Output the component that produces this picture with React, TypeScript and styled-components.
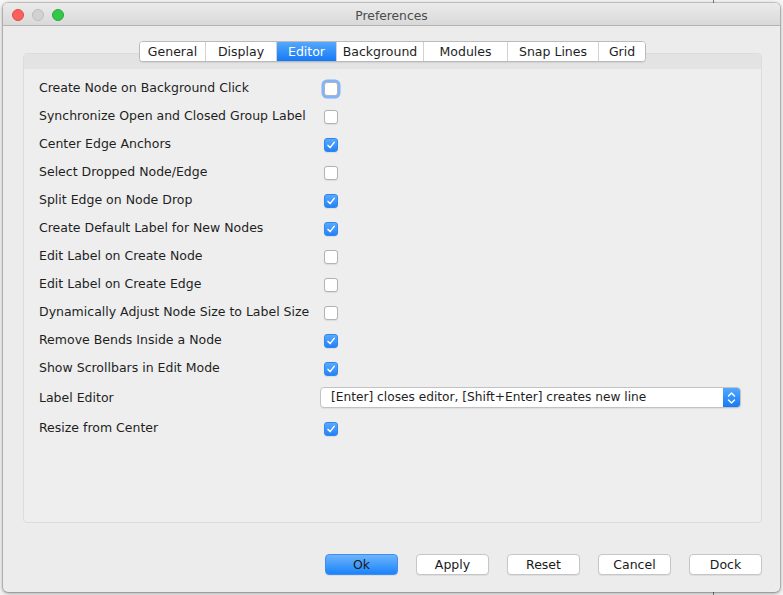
import React from 'react';
import styled, { createGlobalStyle } from 'styled-components';

const Global = createGlobalStyle`
  *, *::before, *::after { box-sizing: border-box; }
  html, body { margin: 0; padding: 0; }
  body {
    width: 783px;
    height: 595px;
    overflow: hidden;
    background:
      linear-gradient(to right, transparent 713px, #7d7d7d 713px, #7d7d7d 714px, transparent 714px),
      #f5f5f5;
    font-family: "DejaVu Sans", "Liberation Sans", sans-serif;
    font-size: 12.5px;
    color: #1e1e1e;
  }
`;

const Window = styled.div`
  margin: 3px 3px 0 3px;
  width: 777px;
  height: 589px;
  display: flex;
  flex-direction: column;
  background: #ececec;
  border-radius: 5px;
  overflow: hidden;
  box-shadow: 0 0 0 1px rgba(0, 0, 0, 0.12), 0 1px 4px rgba(0, 0, 0, 0.45);
`;

const TitleBar = styled.div`
  flex: none;
  height: 23px;
  display: grid;
  grid-template-columns: 1fr auto 1fr;
  align-items: center;
  background: linear-gradient(#ebebeb, #d9d9d9);
  border-bottom: 1px solid #b3b3b3;
`;

const Lights = styled.div`
  display: flex;
  gap: 8px;
  padding-left: 9px;
  padding-top: 1px;
`;

const Light = styled.span<{ $fill: string; $edge: string }>`
  width: 12px;
  height: 12px;
  border-radius: 50%;
  background: ${(p) => p.$fill};
  border: 1px solid ${(p) => p.$edge};
`;

const Title = styled.div`
  font-size: 12.3px;
  color: #4b4b4b;
  padding-top: 4px;
`;

const Body = styled.div`
  flex: 1;
  display: flex;
  flex-direction: column;
  padding: 15px 18px 0 20px;
`;

const TabsRow = styled.div`
  display: flex;
  justify-content: center;
  position: relative;
  z-index: 1;
`;

const TabBar = styled.div`
  display: flex;
  height: 21px;
  background: #fff;
  border: 1px solid #bababa;
  border-radius: 4px;
  overflow: hidden;
  box-shadow: 0 1px 1px rgba(0, 0, 0, 0.08);
`;

const Tab = styled.div<{ $w: number; $active?: boolean }>`
  width: ${(p) => p.$w}px;
  text-align: center;
  line-height: 19px;
  font-size: 12.5px;
  white-space: nowrap;
  border-left: 1px solid #d2d2d2;
  color: ${(p) => (p.$active ? '#fff' : '#1e1e1e')};
  background: ${(p) => (p.$active ? 'linear-gradient(#54a8fc, #157af6)' : '#fff')};
  &:first-child { border-left: none; }
`;

const Panel = styled.div`
  margin-top: -9px;
  height: 470px;
  background: #eeeeee;
  border: 1px solid #dcdcdc;
  border-radius: 4px;
  overflow: hidden;
`;

const Band = styled.div`
  height: 15px;
  background: #e3e3e3;
`;

const Rows = styled.div`
  padding: 4px 0 0 15px;
`;

const Row = styled.div<{ $h?: number }>`
  display: grid;
  grid-template-columns: 281px 421px;
  align-items: center;
  height: ${(p) => p.$h ?? 28}px;
`;

const Label = styled.span`
  font-size: 12.5px;
  white-space: nowrap;
  color: #1e1e1e;
`;

const Box = styled.span<{ $checked?: boolean; $focused?: boolean }>`
  margin: 3px 0 0 4px;
  width: 14px;
  height: 14px;
  border-radius: 3px;
  display: flex;
  align-items: center;
  justify-content: center;
  border: 1px solid ${(p) => (p.$checked ? '#2f86f2' : '#b3b3b3')};
  background: ${(p) => (p.$checked ? 'linear-gradient(#5aabfd, #2482f7)' : '#fff')};
  box-shadow: ${(p) =>
    p.$focused ? '0 0 0 2.5px rgba(95, 160, 250, 0.75)' : '0 0.5px 1px rgba(0,0,0,0.08)'};
`;

const Combo = styled.div`
  height: 21px;
  margin-top: 1px;
  display: flex;
  align-items: stretch;
  background: #fff;
  border: 1px solid #c2c2c2;
  border-radius: 4px;
  overflow: hidden;
  box-shadow: 0 1px 1px rgba(0, 0, 0, 0.06);
`;

const ComboText = styled.span`
  flex: 1;
  padding-left: 10px;
  line-height: 19px;
  font-size: 12.2px;
  white-space: nowrap;
`;

const ComboArrow = styled.span`
  width: 17px;
  display: flex;
  align-items: center;
  justify-content: center;
  background: linear-gradient(#54a8fc, #157af6);
`;

const Footer = styled.div`
  display: flex;
  justify-content: flex-end;
  gap: 18px;
  margin-top: 31px;
`;

const Button = styled.div<{ $primary?: boolean }>`
  width: 73px;
  height: 21px;
  display: flex;
  align-items: center;
  justify-content: center;
  font-size: 12.5px;
  color: #1a1a1a;
  border-radius: 4px;
  border: 1px solid ${(p) => (p.$primary ? '#3f8ef3' : '#c6c6c6')};
  background: ${(p) => (p.$primary ? 'linear-gradient(#6db4fb, #1b83fb)' : '#fff')};
  box-shadow: 0 1px 1px rgba(0, 0, 0, 0.07);
`;

const Check = () => (
  <svg width="10" height="10" viewBox="0 0 10 10">
    <path d="M2 5.4 L4.1 7.6 L8.2 2.4" fill="none" stroke="#fff" strokeWidth="1.5" strokeLinecap="round" strokeLinejoin="round" />
  </svg>
);

const Arrows = () => (
  <svg width="9" height="14" viewBox="0 0 9 14">
    <path d="M1.5 5 L4.5 2 L7.5 5 M1.5 9 L4.5 12 L7.5 9" fill="none" stroke="#fff" strokeWidth="1.4" strokeLinecap="round" strokeLinejoin="round" />
  </svg>
);

const tabs: [string, number][] = [
  ['General', 65],
  ['Display', 71],
  ['Editor', 60],
  ['Background', 87],
  ['Modules', 84],
  ['Snap Lines', 91],
  ['Grid', 47],
];

const options: [string, boolean][] = [
  ['Create Node on Background Click', false],
  ['Synchronize Open and Closed Group Label', false],
  ['Center Edge Anchors', true],
  ['Select Dropped Node/Edge', false],
  ['Split Edge on Node Drop', true],
  ['Create Default Label for New Nodes', true],
  ['Edit Label on Create Node', false],
  ['Edit Label on Create Edge', false],
  ['Dynamically Adjust Node Size to Label Size', false],
  ['Remove Bends Inside a Node', true],
  ['Show Scrollbars in Edit Mode', true],
];

export default function App() {
  return (
    <>
      <Global />
      <Window>
        <TitleBar>
          <Lights>
            <Light $fill="#fc605c" $edge="#de4b46" />
            <Light $fill="#d2d2d2" $edge="#bdbdbd" />
            <Light $fill="#34c84a" $edge="#28ab36" />
          </Lights>
          <Title>Preferences</Title>
          <span />
        </TitleBar>
        <Body>
          <TabsRow>
            <TabBar>
              {tabs.map(([t, w]) => (
                <Tab key={t} $w={w} $active={t === 'Editor'}>
                  {t}
                </Tab>
              ))}
            </TabBar>
          </TabsRow>
          <Panel>
            <Band />
            <Rows>
              {options.map(([label, checked], i) => (
                <Row key={label}>
                  <Label>{label}</Label>
                  <Box $checked={checked} $focused={i === 0}>
                    {checked && <Check />}
                  </Box>
                </Row>
              ))}
              <Row $h={32}>
                <Label>Label Editor</Label>
                <Combo>
                  <ComboText>[Enter] closes editor, [Shift+Enter] creates new line</ComboText>
                  <ComboArrow>
                    <Arrows />
                  </ComboArrow>
                </Combo>
              </Row>
              <Row>
                <Label>Resize from Center</Label>
                <Box $checked>
                  <Check />
                </Box>
              </Row>
            </Rows>
          </Panel>
          <Footer>
            <Button $primary>Ok</Button>
            <Button>Apply</Button>
            <Button>Reset</Button>
            <Button>Cancel</Button>
            <Button>Dock</Button>
          </Footer>
        </Body>
      </Window>
    </>
  );
}
